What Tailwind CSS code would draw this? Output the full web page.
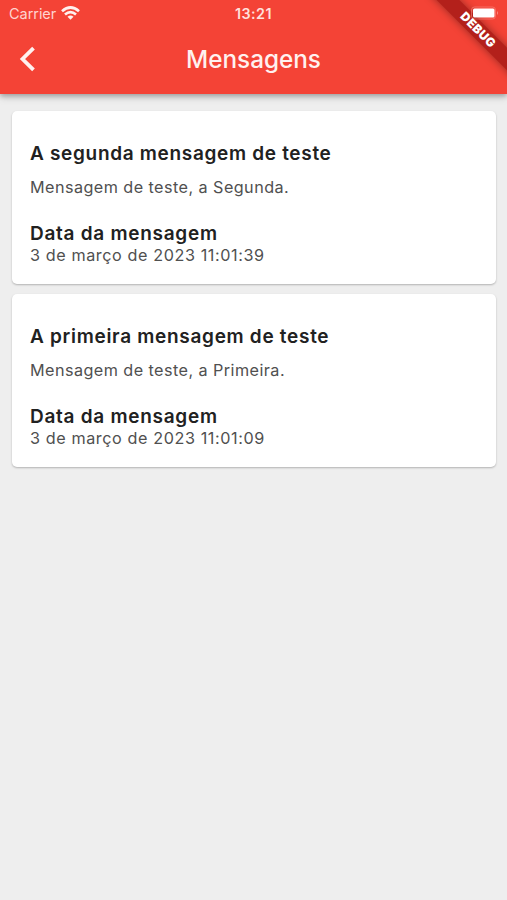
<!DOCTYPE html>
<html lang="pt">
<head>
<meta charset="utf-8">
<title>Mensagens</title>
<script src="https://cdn.jsdelivr.net/npm/@tailwindcss/browser@4"></script>
</head>
<body class="relative h-[900px] w-[507px] overflow-hidden bg-[#eeeeee] font-['Inter',sans-serif]">
<header class="relative h-[94px] bg-[#f44336] text-[#fff1ef] shadow-[0_2px_5px_rgba(0,0,0,0.28),0_4px_8px_rgba(0,0,0,0.10)]">
  <div class="relative z-20 grid h-[27px] grid-cols-3 items-center pr-[7px] pl-[9px]">
    <div class="flex items-center gap-[5px]">
      <span class="text-[14.5px] leading-[18px] tracking-[-0.05px] text-[#ffd3cf]">Carrier</span>
      <svg class="-mt-[2px] h-[14px] w-[19px]" viewBox="0 0 19 14" fill="none" stroke="#fff1ef" stroke-width="2.700"><path d="M1 5.2Q9.500-2.200 18 5.200M4 8.500Q9.500 3.900 15 8.500"/><path d="M6.500 10.700Q9.500 8.400 12.500 10.700L9.500 13.700Z" fill="#fff1ef" stroke="none"/></svg>
    </div>
    <span class="pr-[2px] text-center text-[14.3px] leading-[18px] font-semibold tracking-[0.5px] text-[#ffe0dc]">13:21</span>
    <svg class="-mt-[1px] h-[14px] w-[30px] justify-self-end" viewBox="0 0 30 14"><rect x="1.500" y="1" width="24" height="12" rx="3" fill="none" stroke="#f98b82" stroke-opacity=".6"/><rect x="3" y="2.500" width="21.500" height="9" rx="1.500" fill="#fff"/><path d="M27 5Q29 7 27 9Z" fill="#f98b82"/></svg>
  </div>
  <div class="grid h-[66px] grid-cols-[60px_1fr_60px] items-center">
    <svg class="ml-[19px] h-[26px] w-[18px] -translate-y-px" viewBox="0 0 18 26" fill="none" stroke="#fff1ef" stroke-width="3.800"><path d="M14.500 2.200L3.500 13L14.500 23.800"/></svg>
    <h1 class="pb-[2px] text-center text-[24.3px] leading-[30px] font-medium tracking-[-0.02px]">Mensagens</h1>
  </div>
  <div class="pointer-events-none absolute top-0 right-0 z-10 h-[94px] w-[120px] overflow-hidden">
    <div class="absolute top-[21.500px] left-[31px] h-[16px] w-[120px] rotate-45 bg-[#b3201b] shadow-[0_0_8px_rgba(0,0,0,0.4)]"></div>
  </div>
  <div class="absolute top-[21.500px] left-[418px] z-30 flex h-[16px] w-[120px] rotate-45 items-center justify-center text-[12.2px] leading-none font-black tracking-[0.4px] text-white">DEBUG</div>
</header>
<main class="flex flex-col gap-[10px] px-[11.5px] pt-[17px]">
  <article class="h-[173px] rounded-[5px] bg-white px-[18.5px] pt-[30px] text-[16.2px] leading-[20px] text-[#505050] shadow-[0_1px_2px_rgba(0,0,0,0.25)]">
    <h2 class="text-[19px] leading-[26px] font-semibold tracking-[0.68px] text-[#212121]">A segunda mensagem de teste</h2>
    <p class="mt-[10px] tracking-[0.44px]">Mensagem de teste, a Segunda.</p>
    <h3 class="mt-[24px] text-[19px] leading-[26px] font-semibold tracking-[0.72px] text-[#212121]">Data da mensagem</h3>
    <p class="-mt-[2px] tracking-[0.59px]">3 de março de 2023 11:01:39</p>
  </article>
  <article class="h-[173px] rounded-[5px] bg-white px-[18.5px] pt-[30px] text-[16.2px] leading-[20px] text-[#505050] shadow-[0_1px_2px_rgba(0,0,0,0.25)]">
    <h2 class="text-[19px] leading-[26px] font-semibold tracking-[0.7px] text-[#212121]">A primeira mensagem de teste</h2>
    <p class="mt-[10px] tracking-[0.44px]">Mensagem de teste, a Primeira.</p>
    <h3 class="mt-[24px] text-[19px] leading-[26px] font-semibold tracking-[0.72px] text-[#212121]">Data da mensagem</h3>
    <p class="-mt-[2px] tracking-[0.59px]">3 de março de 2023 11:01:09</p>
  </article>
</main>
</body>
</html>
